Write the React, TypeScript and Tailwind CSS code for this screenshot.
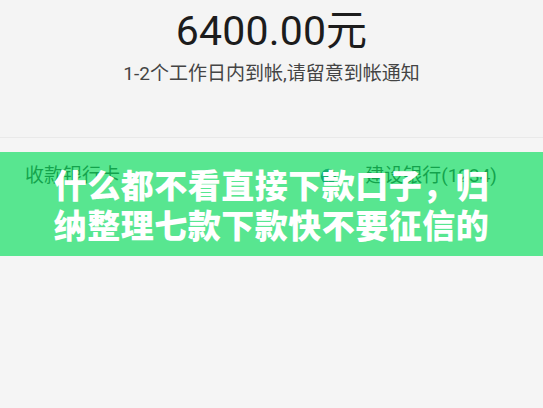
import React from 'react';

const BankLogo: React.FC = () => (
  <svg width="17" height="17" viewBox="0 0 20 20" className="shrink-0">
    <circle cx="10" cy="10" r="9" fill="#123f78" />
    <path d="M10 4 L16 10 L10 16 L7 13 L10 10 L7 7 Z" fill="#f5f5f5" />
  </svg>
);

const App: React.FC = () => {
  return (
    <div
      className="relative w-[543px] h-[408px] overflow-hidden bg-[#f5f5f5]"
      style={{ fontFamily: 'Roboto, "Noto Sans CJK SC", sans-serif' }}
    >
      {/* amount block */}
      <div className="h-[137px] bg-[#f4f4f4] flex flex-col items-center pt-[7px]">
        <div className="text-[41px] leading-[48px] text-[#1c1c1c] tracking-[0.2px]">6400.00元</div>
        <div className="mt-[6px] text-[19px] leading-[26px] text-[#444444]">1-2个工作日内到帐,请留意到帐通知</div>
      </div>
      <div className="h-px bg-[#e9e9e9]" />

      {/* receiving account row */}
      <div className="flex items-center justify-between pl-[25px] pr-[46px] pt-[26px] text-[19px] leading-[24px] text-[#111111]">
        <span>收款银行卡</span>
        <div className="flex items-center gap-[28px]">
          <BankLogo />
          <span>建设银行(1234)</span>
        </div>
      </div>

      {/* overlay title banner */}
      <div className="absolute left-0 right-0 top-[152px] h-[104px] bg-[rgba(21,224,101,0.7)] flex items-center justify-center px-[45px]">
        <p
          className="text-center text-white font-black text-[33px] leading-[40.5px] tracking-[0.5px]"
          style={{ fontFamily: '"Noto Sans CJK SC", sans-serif' }}
        >
          什么都不看直接下款口子，归纳整理七款下款快不要征信的
        </p>
      </div>
    </div>
  );
};

export default App;
